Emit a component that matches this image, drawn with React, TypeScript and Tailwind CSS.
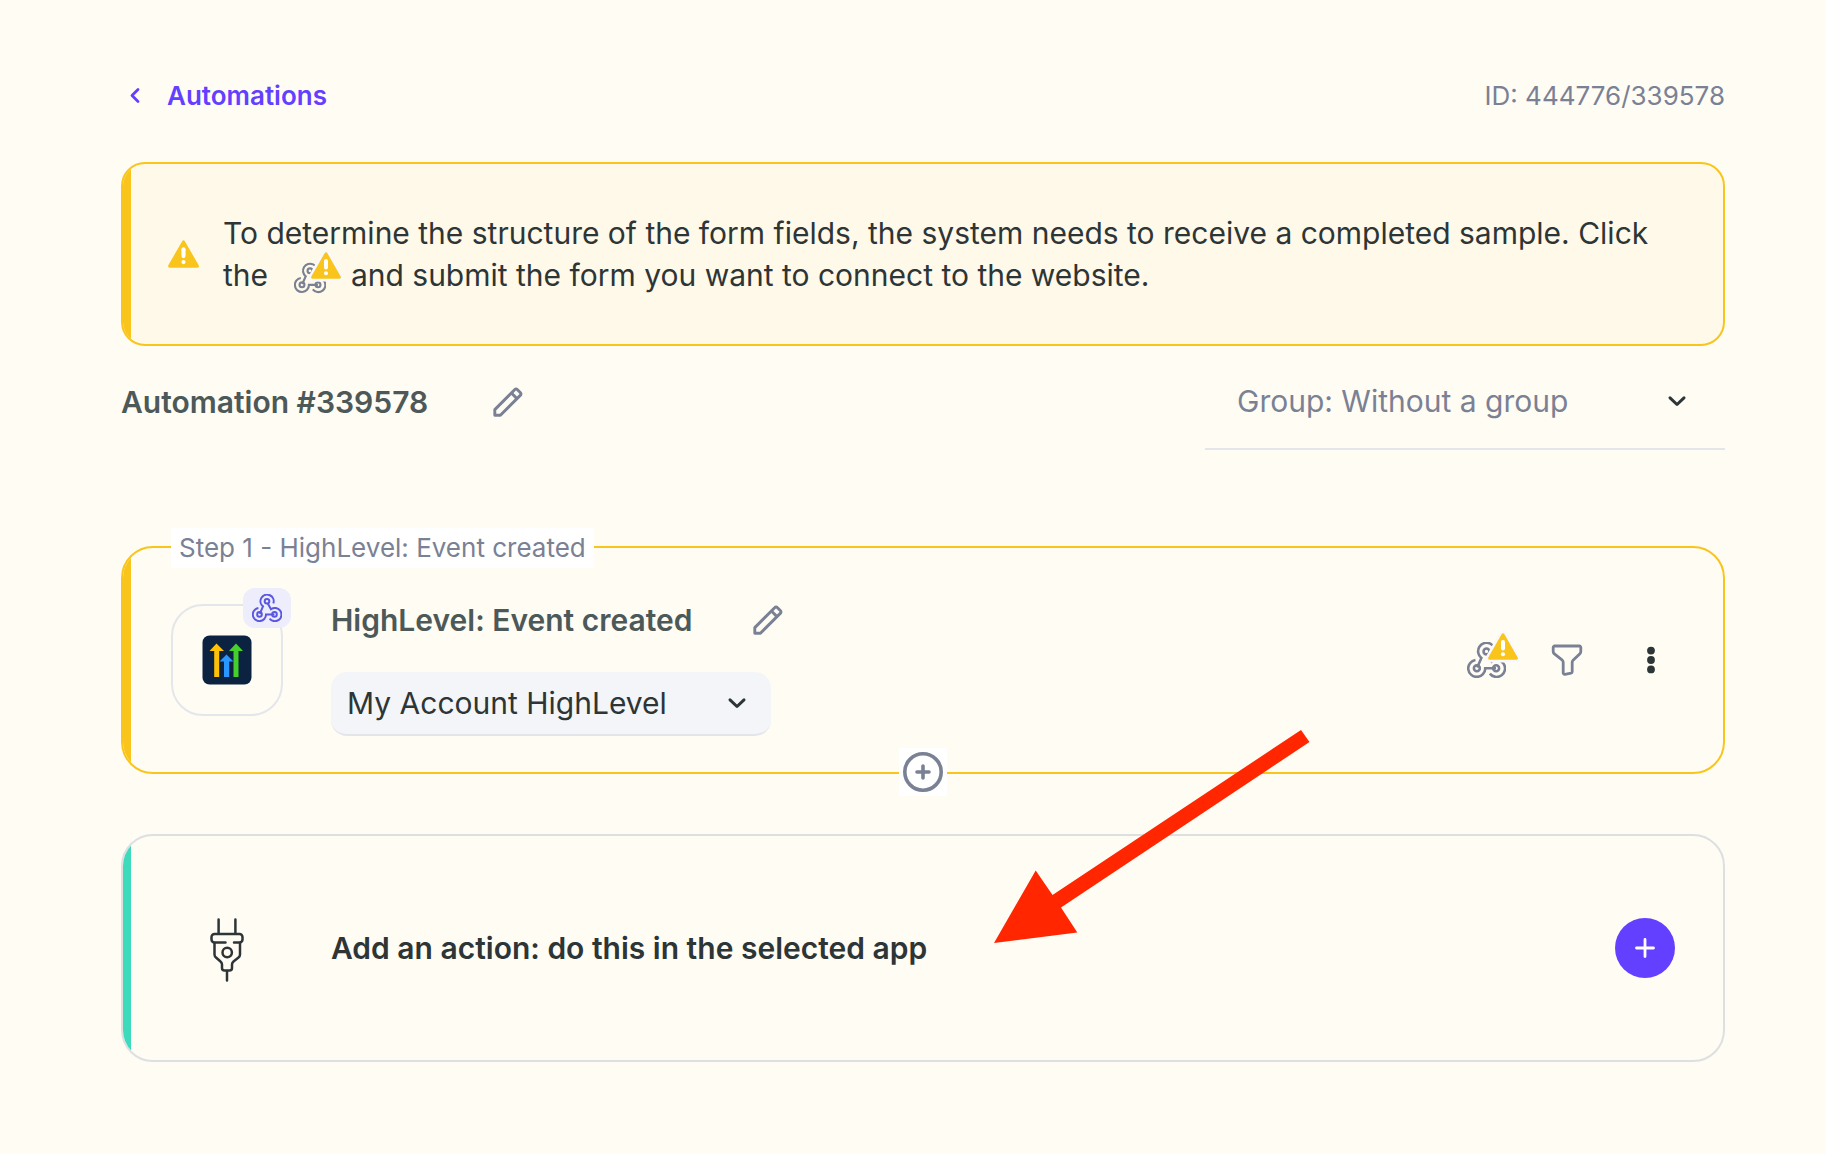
import React from "react";

const Webhook = ({ className, strokeWidth }: { className: string; strokeWidth: number }) => (
  <svg className={className} viewBox="0 0 30 28" fill="none" stroke="currentColor" strokeWidth={strokeWidth} strokeLinecap="butt" aria-hidden="true">
    <path d="M21.3 9.400A6.600 6.600 0 1 0 11 12.400L7.800 19.800" />
    <circle cx="15" cy="7.300" r="2.300" />
    <path d="M6.400 14A6.600 6.600 0 1 0 14 20.400H22.400" />
    <circle cx="7.500" cy="20.400" r="2.300" />
    <path d="M15.800 9.400L19 15.200A6.600 6.600 0 1 1 17.600 24.600" />
    <circle cx="22.500" cy="20.400" r="2.300" />
  </svg>
);

const Warning = ({ className, halo }: { className: string; halo?: boolean }) => (
  <svg className={className} viewBox="0 0 30 27" overflow="visible" aria-hidden="true">
    {halo && <path d="M15 1.500L28.500 25.500H1.500Z" fill="#f9f9fb" stroke="#f9f9fb" strokeWidth="8" strokeLinejoin="round" />}
    <path d="M15 1.800L28.400 25.200H1.600Z" fill="#f9c51c" stroke="#f9c51c" strokeWidth="3" strokeLinejoin="round" />
    <path d="M15 9V15.500" stroke="#fff" strokeWidth="4" strokeLinecap="round" />
    <circle cx="15" cy="21.300" r="2" fill="#fff" />
  </svg>
);

const Pencil = () => (
  <svg className="size-8" viewBox="0 0 32 32" fill="none" stroke="#7a8194" strokeWidth="2.900" strokeLinejoin="round" aria-hidden="true">
    <path d="M2.800 29.200V23.600L22.900 3.500a1.600 1.600 0 0 1 2.300 0L28.500 6.800a1.600 1.600 0 0 1 0 2.300L8.400 29.200Z" />
    <path d="M19.400 7L25 12.600" />
  </svg>
);

const Chevron = ({ className }: { className: string }) => (
  <svg className={className} viewBox="0 0 20 20" fill="none" stroke="#2d3536" strokeWidth="3" strokeLinecap="round" strokeLinejoin="round" aria-hidden="true">
    <path d="M3 6.800L10 13.500L17 6.800" />
  </svg>
);

export default function App() {
  return (
    <main className="relative min-h-screen bg-[#fffcf4] pt-19 pr-[101px] pb-23 pl-[121px] font-['Inter',sans-serif] text-[#2d3536]">
      <header className="flex h-10 items-center justify-between pb-0.5 text-[26px]">
        <a href="#automations" className="flex items-center gap-6 pl-1 font-semibold text-[#6340ff]">
          <svg className="h-5 w-[18px]" viewBox="0 0 18 20" fill="none" stroke="currentColor" strokeWidth="2.800" strokeLinecap="round" strokeLinejoin="round" aria-hidden="true">
            <path d="M13 4.500L7 10.500L13 16.500" />
          </svg>
          Automations
        </a>
        <span className="text-[#7a8194]">ID: 444776/339578</span>
      </header>

      <section className="relative mt-[46px] flex items-center overflow-hidden rounded-3xl border-2 border-[#f9c51c] bg-[#fff9e9] py-12 pr-12 pl-[45px]">
        <span className="absolute inset-y-0 left-0 w-2 bg-[#f9c51c]" />
        <Warning className="mr-6 h-7 w-[31px] shrink-0" />
        <p className="text-[30px] leading-[42px]">
          To determine the structure of the form fields, the system needs to receive a completed sample. Click the{" "}
          <span className="relative mx-2 inline-block h-8 w-[50px] align-middle text-[#7a8194]">
            <Webhook className="absolute top-0 left-2.5 h-8 w-8" strokeWidth={2} />
            <Warning className="absolute -top-2.5 left-[27px] h-[27px] w-[30px]" halo />
          </span>{" "}
          and submit the form you want to connect to the website.
        </p>
      </section>

      <div className="mt-2 flex h-24 items-center justify-between">
        <div className="flex items-center gap-16">
          <h1 className="text-[30px] font-semibold text-[#4d5958]">Automation #339578</h1>
          <button type="button" aria-label="Rename automation"><Pencil /></button>
        </div>
        <div className="relative flex h-full w-[520px] items-center border-b-2 border-[#e5e6ec]">
          <select aria-label="Group" className="h-full w-full appearance-none bg-transparent pr-16 pl-8 text-[30px] text-[#7a8194]">
            <option>Group: Without a group</option>
          </select>
          <Chevron className="pointer-events-none absolute right-[38px] size-5" />
        </div>
      </div>

      <section className="relative mt-24">
        <div className="relative flex h-[228px] items-center overflow-hidden rounded-4xl border-2 border-[#f9c51c] pr-14 pl-12">
          <span className="absolute inset-y-0 left-0 w-2 bg-[#f9c51c]" />
          <div className="relative flex size-28 items-center justify-center rounded-4xl border-2 border-[#e5e6ec]">
            <svg className="size-[50px]" viewBox="0 0 50 50" aria-hidden="true">
              <rect x="0.500" y="0.500" width="49" height="49" rx="7" fill="#0b2341" />
              <path d="M14.500 8.500L22 16H17.200V42H12.200V16H7.500Z" fill="#ffc107" />
              <path d="M34 8.500L41 16H36.500V42H31.500V16H27Z" fill="#45d02c" />
              <path d="M24.500 19.500L31.500 26.500H27.200V42H22V26.500H17.500Z" fill="#2a96ff" />
            </svg>
            <span className="absolute -top-[18px] -right-[10px] flex h-10 w-12 items-center justify-center rounded-xl bg-[#ededfb] text-[#5b57e0]">
              <Webhook className="h-7 w-[30px]" strokeWidth={2} />
            </span>
          </div>
          <div className="mt-4 ml-12">
            <div className="flex h-10 items-center gap-15">
              <h2 className="text-[30px] font-semibold text-[#4d5958]">HighLevel: Event created</h2>
              <button type="button" aria-label="Rename step"><Pencil /></button>
            </div>
            <div className="relative mt-8 flex h-16 w-110 items-center rounded-2xl border-b-2 border-[#e3e5ea] bg-[#f4f5f8]">
              <select aria-label="Account" className="h-full w-full appearance-none bg-transparent pr-16 pl-4 text-[30px]">
                <option>My Account HighLevel</option>
              </select>
              <Chevron className="pointer-events-none absolute right-6 size-5" />
            </div>
          </div>
          <div className="ml-auto flex items-center">
            <button type="button" aria-label="Webhook sample missing" className="relative mr-[45px] h-9 w-[39px] text-[#7a8194]">
              <Webhook className="h-9 w-[39px]" strokeWidth={2} />
              <Warning className="absolute -top-[9px] left-[21px] h-[27px] w-[30px]" halo />
            </button>
            <button type="button" aria-label="Filter" className="mr-[52px]">
              <svg className="size-8" viewBox="0 0 32 32" fill="none" stroke="#7a8194" strokeWidth="2.800" strokeLinejoin="round" aria-hidden="true">
                <path d="M3.600 2h24.800a1.400 1.400 0 0 1 1.400 1.400v4.200a3 3 0 0 1-.9 2.100l-6.800 6.500a3 3 0 0 0-.9 2.100v9.400a1.400 1.400 0 0 1-1.100 1.400l-6.200 1.200a1.400 1.400 0 0 1-1.700-1.400V18.300a3 3 0 0 0-.9-2.100L3.100 9.700a3 3 0 0 1-.9-2.100V3.400A1.400 1.400 0 0 1 3.600 2Z" />
              </svg>
            </button>
            <button type="button" aria-label="More">
              <svg className="size-8" viewBox="0 0 32 32" fill="#2d3536" aria-hidden="true">
                <circle cx="16" cy="6.600" r="3.900" />
                <circle cx="16" cy="16" r="3.900" />
                <circle cx="16" cy="25.400" r="3.900" />
              </svg>
            </button>
          </div>
        </div>
        <span className="absolute -top-[18px] left-[50px] flex h-10 items-center bg-white px-2 pb-0.5 text-[26px] text-[#7a8194]">Step 1 - HighLevel: Event created</span>
        <button type="button" aria-label="Add step" className="absolute -bottom-[22px] left-1/2 -ml-6 flex size-12 items-center justify-center bg-white">
          <svg className="size-10" viewBox="0 0 40 40" fill="none" stroke="#7a8194" strokeWidth="3.600" strokeLinecap="round" aria-hidden="true">
            <circle cx="20" cy="20" r="18.200" />
            <path d="M20 14V26M14 20H26" />
          </svg>
        </button>
      </section>

      <section className="relative mt-15 flex h-[228px] items-center overflow-hidden rounded-4xl border-2 border-[#dedfe1] px-12">
        <span className="absolute inset-y-0 left-0 w-2 bg-[#3ddabb]" />
        <span className="flex w-28 justify-center pt-1">
          <svg className="h-16 w-[34px]" viewBox="0 0 34 64" fill="none" stroke="#2d3536" strokeWidth="2.500" strokeLinecap="round" strokeLinejoin="round" aria-hidden="true">
            <path d="M8.600 1.500V15M25.400 1.500V15M15.500 24.500H4.500A3 3 0 0 1 1.500 21.500V19A3 3 0 0 1 4.500 16H29.500A3 3 0 0 1 32.500 19V21.500A3 3 0 0 1 29.500 24.500H24" />
            <path d="M4.500 25V36.500a4 4 0 0 0 1.500 3L10.500 43.500a4 4 0 0 1 1.500 3V50a2.500 2.500 0 0 0 2.500 2.500H19.500A2.500 2.500 0 0 0 22 50V46.500a4 4 0 0 1 1.500-3L28.500 39.500a4 4 0 0 0 1.500-3V25M17 53V62.500" />
            <circle cx="17.200" cy="34.500" r="4.700" />
          </svg>
        </span>
        <h2 className="ml-12 text-[30px] font-semibold">Add an action: do this in the selected app</h2>
        <button type="button" aria-label="Add an action" className="ml-auto flex size-15 items-center justify-center rounded-full bg-[#6340ff]">
          <svg className="size-5" viewBox="0 0 20 20" fill="none" stroke="#fff" strokeWidth="2.800" strokeLinecap="round" aria-hidden="true">
            <path d="M10 1.500V18.500M1.500 10H18.500" />
          </svg>
        </button>
      </section>

      <svg className="pointer-events-none absolute top-[730px] left-[994px] h-[213px] w-[316px]" viewBox="0 0 316 213" fill="#ff2600" aria-hidden="true">
        <path d="M0 213L41.700 140.500L58.500 165L307 0L315.500 12L67 177.500L83.300 202.500Z" />
      </svg>
    </main>
  );
}
